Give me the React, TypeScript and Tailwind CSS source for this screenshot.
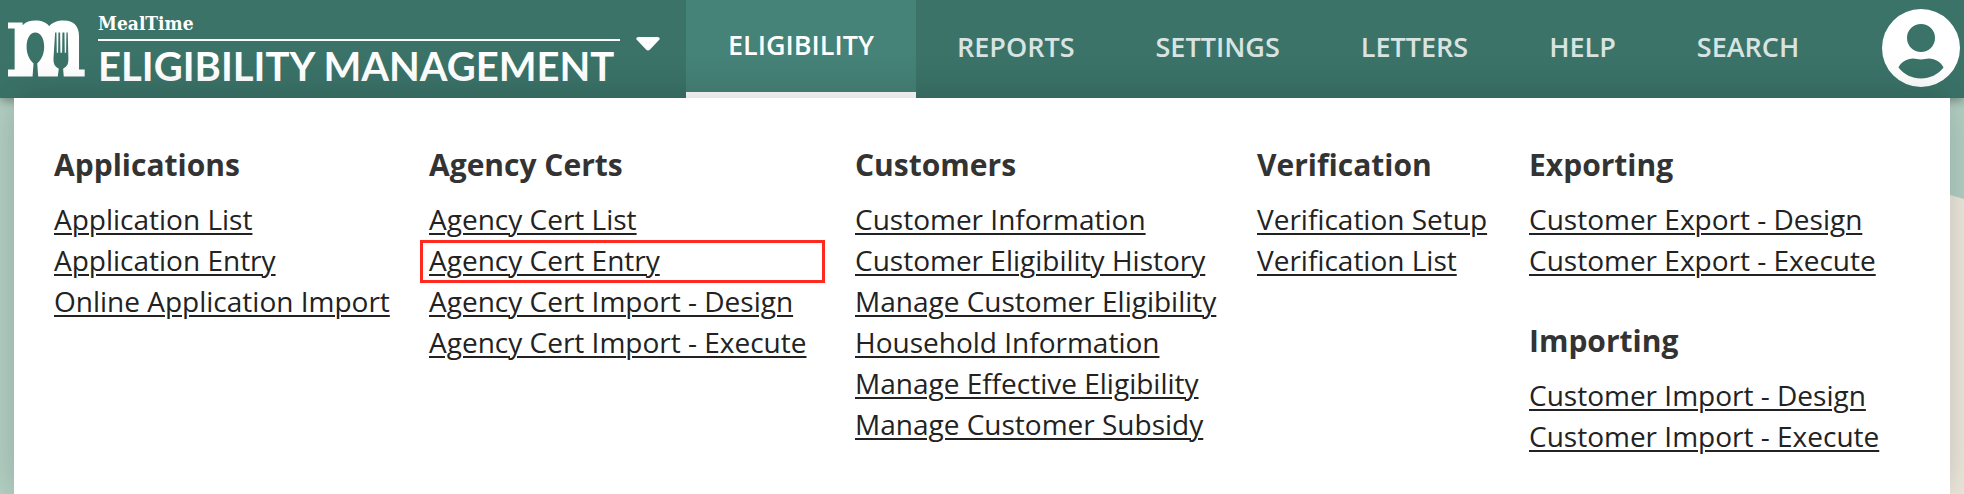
type Group = { title: string; links: string[]; marked?: string };

const columns: Group[][] = [
  [{ title: "Applications", links: ["Application List", "Application Entry", "Online Application Import"] }],
  [
    {
      title: "Agency Certs",
      links: ["Agency Cert List", "Agency Cert Entry", "Agency Cert Import - Design", "Agency Cert Import - Execute"],
      marked: "Agency Cert Entry",
    },
  ],
  [
    {
      title: "Customers",
      links: [
        "Customer Information",
        "Customer Eligibility History",
        "Manage Customer Eligibility",
        "Household Information",
        "Manage Effective Eligibility",
        "Manage Customer Subsidy",
      ],
    },
  ],
  [{ title: "Verification", links: ["Verification Setup", "Verification List"] }],
  [
    { title: "Exporting", links: ["Customer Export - Design", "Customer Export - Execute"] },
    { title: "Importing", links: ["Customer Import - Design", "Customer Import - Execute"] },
  ],
];

const navItems = ["REPORTS", "SETTINGS", "LETTERS", "HELP", "SEARCH"];

function Logo() {
  return (
    <svg viewBox="0 0 232 170" className="h-[57px] w-[77px] shrink-0" aria-hidden="true">
      <path
        fill="#fff"
        fillRule="evenodd"
        d="M0 7H44V15C54 5 66 1 83 1C101 1 116 7 124 18C134 7 148 1 168 1C198 1 214 18 214 48V148H231V169H168L166 146C178 139 182 133 182 116L180 37H176L175 98H171L170 37H164L163 98H158L157 37H152L151 98H147L146 37H142L137 116C137 133 141 139 153 146L150 169H91L88 130C102 118 109 99 109 80C109 55 98 37 82 37C67 37 56 55 56 80C56 99 63 118 77 130L74 169H0V148H20V25H0Z"
      />
    </svg>
  );
}

function Avatar() {
  return (
    <svg viewBox="0 0 78 78" className="size-[78px]" aria-hidden="true">
      <path
        fill="#fff"
        fillRule="evenodd"
        d="M39 0a39 39 0 1 0 0 78a39 39 0 1 0 0-78ZM39 15a14 14 0 1 1 0 28a14 14 0 1 1 0-28ZM16.500 58.500C19 53 25 49.500 31 49.500C34 49.500 36 50.500 39 50.500C42 50.500 44 49.500 47 49.500C53 49.500 59 53 61.500 58.500C56 65.500 48 69.500 39 69.500C30 69.500 22 65.500 16.500 58.500Z"
      />
    </svg>
  );
}

function LinkGroup({ group }: { group: Group }) {
  return (
    <section>
      <h2 className="text-[30px] leading-[40px] font-bold text-[#333]">{group.title}</h2>
      <ul className="mt-[14px]">
        {group.links.map((label) => (
          <li key={label} className="relative text-[28px] leading-[41px]">
            <a href="#" className="text-[#222] underline decoration-2 underline-offset-[3px]">
              {label}
            </a>
            {label === group.marked && (
              <span className="pointer-events-none absolute top-0 right-[30px] -bottom-0.5 -left-[9px] border-3 border-[#ff2a1f]" />
            )}
          </li>
        ))}
      </ul>
    </section>
  );
}

export default function App() {
  return (
    <div className="relative flex min-h-screen flex-col overflow-hidden bg-[#b4d2c5] font-['Open_Sans','Noto_Sans',sans-serif]">
      <svg
        viewBox="0 0 14 300"
        preserveAspectRatio="none"
        className="absolute top-[195px] right-0 h-[300px] w-[14px]"
        aria-hidden="true"
      >
        <path d="M0 0L14 4V300H0Z" fill="#efeade" />
      </svg>

      <header className="relative flex h-[98px] items-stretch bg-[#3b7369] shadow-[0_2px_10px_rgba(0,0,0,0.4)]">
        <button type="button" aria-label="Switch application" className="flex shrink-0 items-start pl-2 text-white">
          <span className="pt-5">
            <Logo />
          </span>
          <span className="ml-[13px] flex w-[522px] flex-col text-left whitespace-nowrap">
            <span className="mt-[11px] flex h-7 items-start font-['DejaVu_Serif_Condensed','DejaVu_Serif',serif] text-[19px] leading-6 font-bold">
              MealTime
            </span>
            <span className="border-t-2 border-white font-['Lato',sans-serif] text-[40px] leading-[50px] font-bold">
              ELIGIBILITY MANAGEMENT
            </span>
          </span>
          <svg viewBox="0 0 24 14" className="mt-[37px] ml-4 h-[14px] w-6" aria-hidden="true">
            <path d="M2 0H22Q25 1 23 3L14 12.500Q12 14.500 10 12.500L1 3Q-1 1 2 0Z" fill="#fff" />
          </svg>
        </button>

        <nav className="ml-[26px] flex flex-1 items-stretch gap-px text-[27px] leading-[38px] font-semibold">
          <a href="#" className="flex items-center border-b-6 border-white bg-[#458277] px-[42px] pb-0.5 text-white">
            ELIGIBILITY
          </a>
          {navItems.map((item) => (
            <a key={item} href="#" className="flex items-center px-10 pb-1 text-[#d8e4e1]">
              {item}
            </a>
          ))}
        </nav>

        <button type="button" aria-label="Account" className="mr-1 flex shrink-0 items-center pb-0.5">
          <Avatar />
        </button>
      </header>

      <main className="relative mx-[14px] flex-1 bg-white pt-[47px] pb-10 pl-10 shadow-[0_0_40px_rgba(0,0,0,0.2)]">
        <div className="grid grid-cols-[375fr_426fr_402fr_272fr_421fr] whitespace-nowrap">
          {columns.map((groups) => (
            <div key={groups[0].title} className="flex flex-col gap-[40px]">
              {groups.map((group) => (
                <LinkGroup key={group.title} group={group} />
              ))}
            </div>
          ))}
        </div>
      </main>
    </div>
  );
}
